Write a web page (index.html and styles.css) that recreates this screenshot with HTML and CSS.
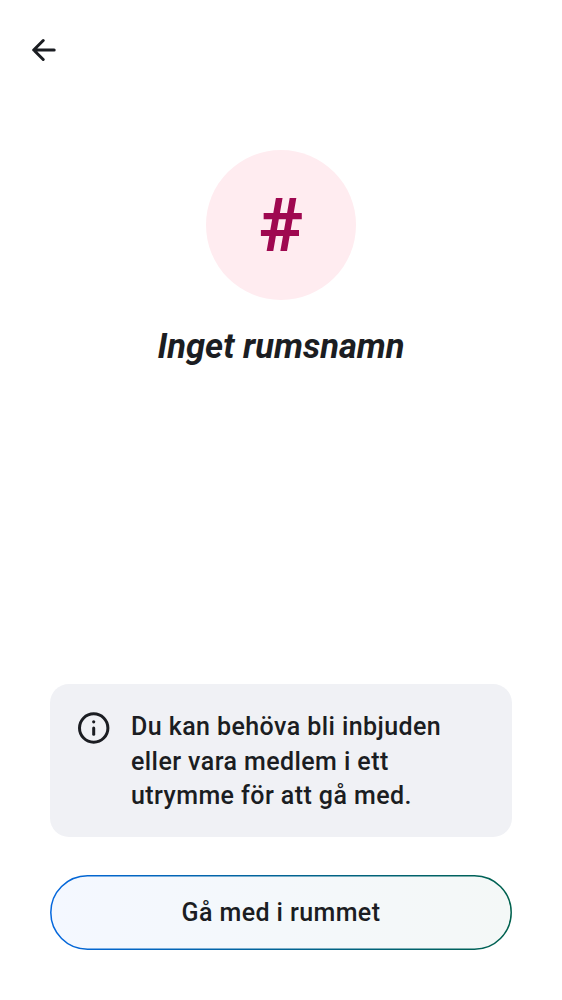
FILE: index.html
```html
<!DOCTYPE html>
<html lang="sv">
<head>
<meta charset="utf-8">
<title>Inget rumsnamn</title>
<link rel="stylesheet" href="styles.css">
</head>
<body>
<div class="screen">
  <header class="topbar">
    <svg class="back" viewBox="0 0 24 24" width="24" height="24"><path d="M22.2 12H2M11.2 2.5L1.7 12l9.5 9.5"/></svg>
  </header>
  <main class="hero">
    <div class="avatar"><span class="hash">#</span></div>
    <h1 class="title">Inget rumsnamn</h1>
  </main>
  <footer class="footer">
    <div class="notice">
      <svg class="info" viewBox="0 0 32 32" width="32" height="32"><circle class="ring" cx="15.7" cy="16" r="14.2"/><circle cx="15.7" cy="9.8" r="1.6"/><rect x="14.2" y="14.4" width="3" height="9.4" rx="1.5"/></svg>
      <p class="message">Du kan behöva bli inbjuden<br>eller vara medlem i ett<br>utrymme för att gå med.</p>
    </div>
    <button class="join">
      <svg class="outline" viewBox="0 0 462 75" width="462" height="75">
        <defs>
          <linearGradient id="edge"><stop offset="0" stop-color="#0467dd"/><stop offset="1" stop-color="#00614e"/></linearGradient>
          <linearGradient id="tint"><stop offset="0" stop-color="#f4f8ff"/><stop offset="1" stop-color="#f4f8f7"/></linearGradient>
        </defs>
        <rect x="0.8" y="0.8" width="460.4" height="73.4" rx="36.7" fill="url(#tint)" stroke="url(#edge)" stroke-width="1.5"/>
      </svg>
      <span class="label">Gå med i rummet</span>
    </button>
  </footer>
</div>
</body>
</html>
```

FILE: styles.css
```css
body { margin: 0; background: #fff; color: #1b1d22; font-family: Roboto, sans-serif; }
.screen { box-sizing: border-box; height: 1000px; padding: 38px 50px 50px; display: flex; flex-direction: column; }
.topbar { height: 112px; margin-left: -18.3px; }
.back { display: block; fill: none; stroke: #1b1d22; stroke-width: 3; stroke-linecap: round; stroke-linejoin: round; }
.hero { flex: 1; display: flex; flex-direction: column; align-items: center; }
.avatar { width: 150px; height: 150px; border-radius: 50%; background: #ffecf0; display: flex; align-items: center; justify-content: center; }
.hash { color: #9f0850; font-size: 75px; font-weight: 700; line-height: 88px; }
.title { margin: 25px 0 0; font-size: 34.5px; line-height: 43px; font-weight: 700; font-style: italic; white-space: nowrap; }
.notice { box-sizing: border-box; height: 153px; border-radius: 19px; background: #f0f1f5; padding: 26px 28px; display: flex; gap: 21px; }
.info { flex: none; margin-top: 2px; fill: #1b1d22; }
.ring { fill: none; stroke: #1b1d22; stroke-width: 3; }
.message { margin: 0; font-size: 25px; line-height: 34.5px; font-weight: 500; letter-spacing: 0.42px; white-space: nowrap; }
.join { position: relative; display: flex; align-items: center; justify-content: center; box-sizing: border-box; width: 100%; height: 75px; margin-top: 38px; padding: 0; border: 0; background: none; font: 500 25px/34px Roboto, sans-serif; letter-spacing: 0.4px; color: #1b1d22; }
.outline { position: absolute; inset: 0; }
.label { position: relative; }
```
